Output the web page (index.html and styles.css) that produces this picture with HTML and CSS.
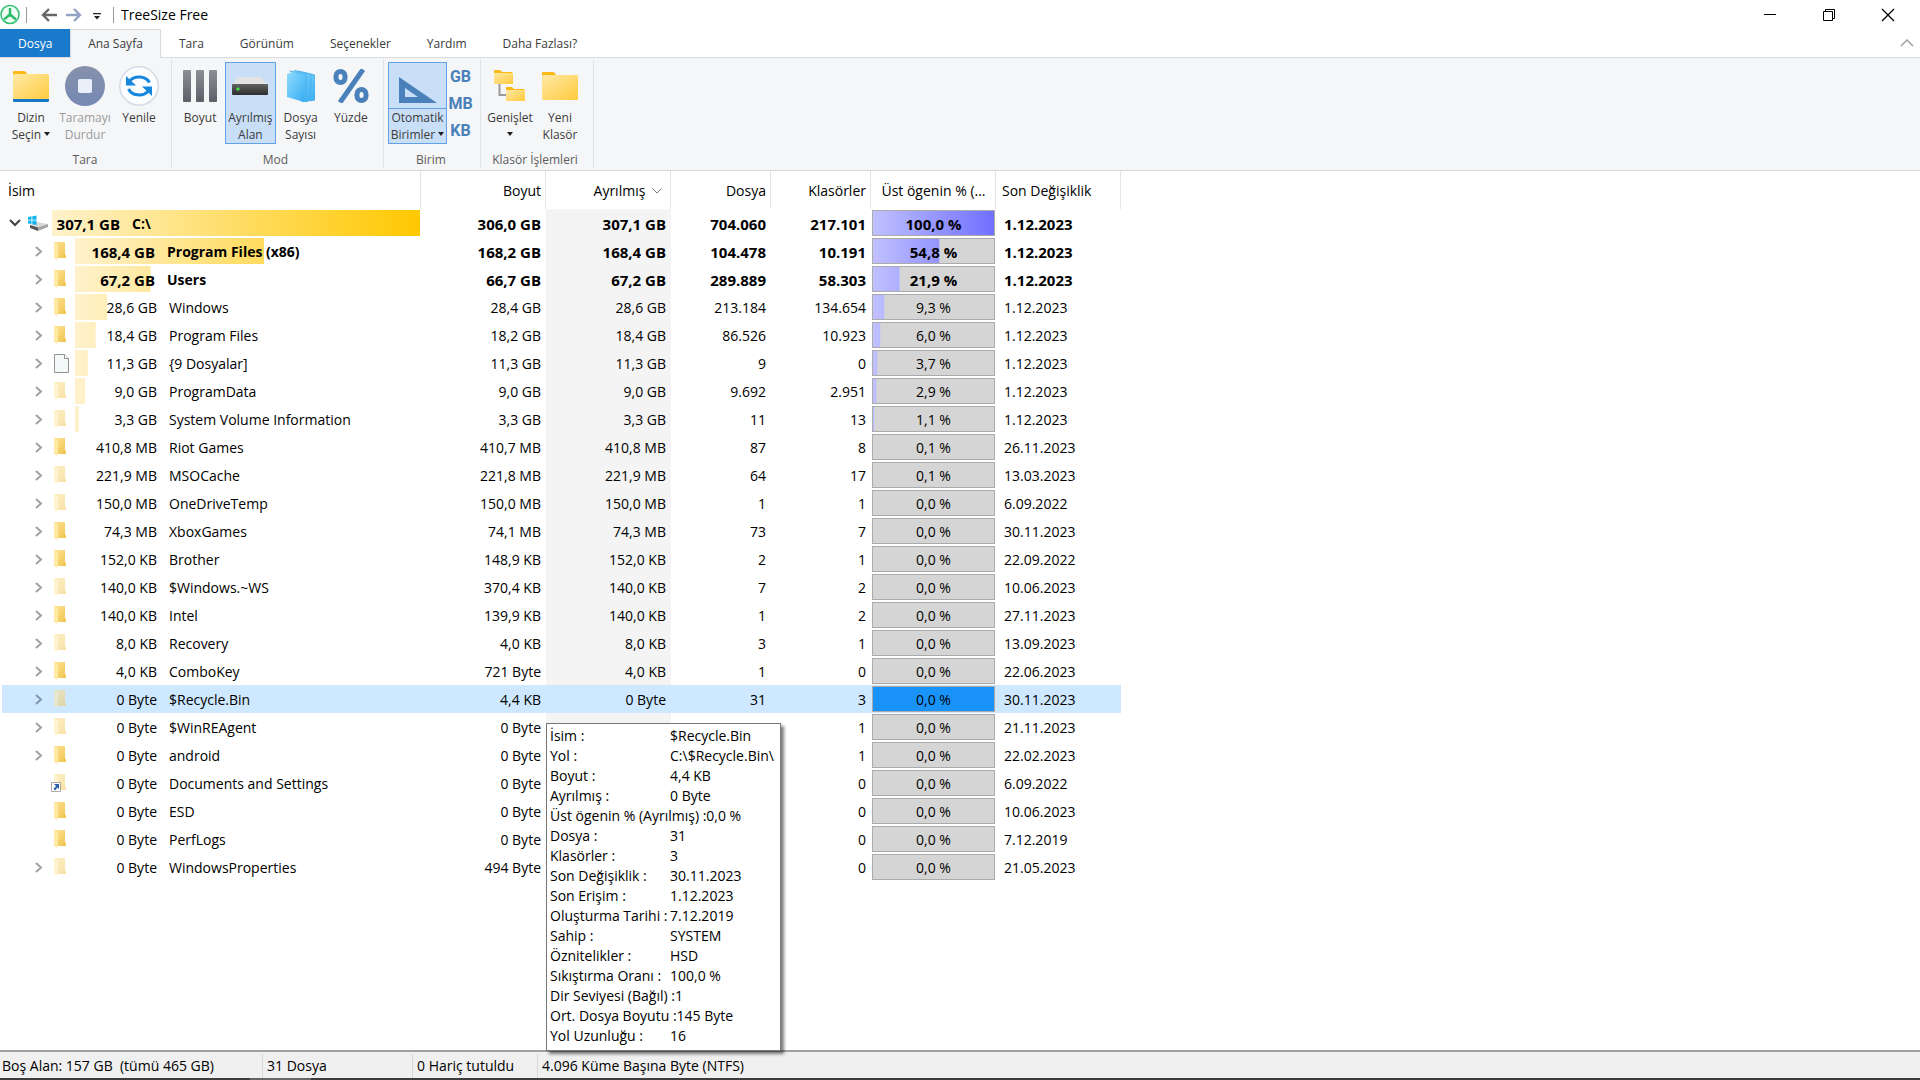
FILE: index.html
```html
<!DOCTYPE html>
<html lang="tr">
<head>
<meta charset="utf-8">
<meta name="viewport" content="width=device-width, initial-scale=1">
<title>TreeSize Free</title>
<link rel="stylesheet" href="styles.css">
</head>
<body>
<svg class="sprite" aria-hidden="true">
  <defs>
    <linearGradient id="g-folder" x1="0" y1="0" x2="1" y2="1"><stop offset="0" stop-color="#ffe9a6"/><stop offset="1" stop-color="#ffcb3d"/></linearGradient>
    <linearGradient id="g-small" x1="0" y1="0" x2="1" y2="1"><stop offset="0" stop-color="#ffe596"/><stop offset="1" stop-color="#f0c24c"/></linearGradient>
    <linearGradient id="g-bar" x1="0" y1="0" x2="0" y2="1"><stop offset="0" stop-color="#8c8f96"/><stop offset="1" stop-color="#5c5f67"/></linearGradient>
    <linearGradient id="g-stop" x1="0" y1="0" x2="0" y2="1"><stop offset="0" stop-color="#8691ab"/><stop offset="1" stop-color="#7689b4"/></linearGradient>
    <linearGradient id="g-drive" x1="0" y1="0" x2="0" y2="1"><stop offset="0" stop-color="#626262"/><stop offset="1" stop-color="#2e2e2e"/></linearGradient>
    <linearGradient id="g-page" x1="0" y1="0" x2="1" y2="1"><stop offset="0" stop-color="#8fdcff"/><stop offset="1" stop-color="#3aaef2"/></linearGradient>
  </defs>
  <symbol id="folder" viewBox="0 0 12 18">
    <path d="M0 0H11V12.500L12 13V16H0Z" fill="url(#g-small)"/>
    <path d="M0 0L4 2.500V15L3 18L0 15.500Z" fill="#ffe9a3"/>
  </symbol>
  <symbol id="file" viewBox="0 0 15 19">
    <path d="M.5.5H10.500L14.500 4.500V18.500H.5Z" fill="#f5f8f9" stroke="#929292"/>
    <path d="M10.500.5V4.500H14.500" fill="#fff" stroke="#929292"/>
  </symbol>
  <symbol id="closed" viewBox="0 0 8 11"><path d="M1 1L6 5.500L1 10" fill="none" stroke="currentColor" stroke-width="2"/></symbol>
</svg>

<header class="titlebar">
  <svg class="logo" width="20" height="21" viewBox="0 0 20 21"><circle cx="10" cy="10.500" r="9" fill="#f0fdf5" stroke="#33c172" stroke-width="1.500"/><path d="M10 4V10.500L4 15.500M10 10.500L16 15.500" fill="none" stroke="#2cbd6b" stroke-width="2.500"/><path d="M10 8L13 12.500H7Z" fill="#2cbd6b"/></svg>
  <span class="rule"></span>
  <button class="quick back" aria-label="Geri"><svg width="16" height="14" viewBox="0 0 16 14"><path d="M16 7H2M8 1L2 7L8 13" fill="none" stroke="#676767" stroke-width="2.400"/></svg></button>
  <button class="quick forward" aria-label="İleri"><svg width="16" height="14" viewBox="0 0 16 14"><path d="M0 7H14M8 1L14 7L8 13" fill="none" stroke="#93a3c4" stroke-width="2.400"/></svg></button>
  <button class="quick more" aria-label="Özelleştir"><svg width="8" height="7" viewBox="0 0 8 7"><path d="M0 0H8V1.200H0ZM1 3H7L4 6.500Z" fill="#222"/></svg></button>
  <span class="rule"></span>
  <h1 class="title">TreeSize Free</h1>
  <div class="window-buttons">
    <button aria-label="Küçült"><svg width="14" height="14" viewBox="0 0 14 14"><path d="M1 6.500H13" stroke="#000"/></svg></button>
    <button aria-label="Geri yükle"><svg width="14" height="14" viewBox="0 0 14 14"><path d="M1.500 3.500H10.500V12.500H1.500ZM3.500 3V1.500H12.500V10.500H11" fill="none" stroke="#000"/></svg></button>
    <button aria-label="Kapat"><svg width="14" height="14" viewBox="0 0 14 14"><path d="M1 1L13 13M13 1L1 13" stroke="#000" stroke-width="1.300"/></svg></button>
  </div>
</header>

<nav class="tabs">
  <button class="tab file-tab">Dosya</button>
  <button class="tab active">Ana Sayfa</button>
  <button class="tab">Tara</button>
  <button class="tab">Görünüm</button>
  <button class="tab">Seçenekler</button>
  <button class="tab">Yardım</button>
  <button class="tab">Daha Fazlası?</button>
  <button class="collapse" aria-label="Şeridi daralt"><svg width="14" height="8" viewBox="0 0 14 8"><path d="M1 7L7 1L13 7" fill="none" stroke="#a0a0a0" stroke-width="1.500"/></svg></button>
</nav>

<section class="ribbon">
  <div class="group scan">
    <div class="tools">
      <button class="tool"><span class="pic"><svg width="36" height="32" viewBox="0 0 36 32"><path d="M0 2Q0 1 1 1H11Q13 1 14 4H34V12H0Z" fill="#fbb916"/><rect y="4" width="36" height="26" rx="1.500" fill="url(#g-folder)"/><path d="M0 29H36V30.500Q36 32 34.500 32H1.500Q0 32 0 30.500Z" fill="#1577c8"/></svg></span><span>Dizin<br>Seçin <i class="caret"></i></span></button>
      <button class="tool" disabled><span class="pic"><svg width="40" height="40" viewBox="0 0 40 40"><circle cx="20" cy="20" r="20" fill="url(#g-stop)"/><rect x="13" y="13" width="14" height="14" rx="2" fill="#eaf0fa"/></svg></span><span>Taramayı<br>Durdur</span></button>
      <button class="tool"><span class="pic"><svg width="40" height="40" viewBox="0 0 40 40"><circle cx="20" cy="20" r="19.200" fill="#fcfdff" stroke="#d3dae8" stroke-width="1.500"/><path d="M30.500 16.500A11.500 9.500 0 0 0 11 14.500M9.500 23A11.500 9.500 0 0 0 29 25.500" fill="none" stroke="#1587dc" stroke-width="3"/><path d="M7 10V19.500H17ZM33 30V20.500H23Z" fill="#1587dc"/></svg></span><span>Yenile</span></button>
    </div>
    <h2>Tara</h2>
  </div>
  <div class="group mode">
    <div class="tools">
      <button class="tool"><span class="pic"><svg width="34" height="32" viewBox="0 0 34 32"><g fill="url(#g-bar)"><rect width="8" height="32" rx="1"/><rect x="13" width="8" height="32" rx="1"/><rect x="26" width="8" height="32" rx="1"/></g></svg></span><span>Boyut</span></button>
      <button class="tool on"><span class="pic"><svg width="36" height="18" viewBox="0 0 36 18"><path d="M6 0H29L36 8H0Z" fill="#e3e3e3"/><rect y="7" width="36" height="11" rx="1" fill="url(#g-drive)"/><circle cx="6" cy="12" r="1.700" fill="#3fe03f"/></svg></span><span>Ayrılmış<br>Alan</span></button>
      <button class="tool"><span class="pic"><svg width="28" height="32" viewBox="0 0 28 32"><g fill="url(#g-page)" stroke="#48b0ec" stroke-width=".8"><path d="M11 1L28 5V30L23 31V6Z"/><path d="M7 .5L24 4V30L19 32V6Z"/><path d="M3 1L19 4.500V32L14 31V6Z"/></g><path d="M0 4L5 2L17 5V32L0 27Z" fill="url(#g-page)"/></svg></span><span>Dosya<br>Sayısı</span></button>
      <button class="tool"><span class="pic"><svg width="36" height="34" viewBox="0 0 36 34"><g fill="none" stroke="#4a81bb" stroke-width="5"><rect x="3" y="2.500" width="9" height="11" rx="4.500"/><rect x="24" y="20.500" width="9" height="11" rx="4.500"/><path d="M30 .5L7 33.500"/></g></svg></span><span>Yüzde</span></button>
    </div>
    <h2>Mod</h2>
  </div>
  <div class="group unit">
    <div class="tools">
      <button class="tool on split"><span class="pic"><svg width="38" height="26" viewBox="0 0 38 26"><path fill-rule="evenodd" d="M0 0L38 26H0ZM6 11V20H19Z" fill="#4a81bb"/></svg></span><span>Otomatik<br>Birimler <i class="caret"></i></span></button>
      <div class="sizes"><button>GB</button><button>MB</button><button>KB</button></div>
    </div>
    <h2>Birim</h2>
  </div>
  <div class="group ops">
    <div class="tools">
      <button class="tool"><span class="pic"><svg width="32" height="32" viewBox="0 0 32 32"><path d="M5.500 14V25H13" fill="none" stroke="#9a9a9a" stroke-width="2"/><path d="M0 0H6L8 2H18V5H0Z" fill="#fbb916"/><rect y="3" width="19" height="11" fill="url(#g-folder)"/><path d="M12 17H18L20 19H30V22H12Z" fill="#fbb916"/><rect x="12" y="20" width="19" height="11" fill="url(#g-folder)"/></svg></span><span>Genişlet<br><i class="caret"></i></span></button>
      <button class="tool"><span class="pic"><svg width="36" height="30" viewBox="0 0 36 30"><path d="M0 2Q0 1 1 1H11Q13 1 14 4H34V12H0Z" fill="#fbb916"/><rect y="4" width="36" height="25" rx="1.500" fill="url(#g-folder)"/></svg></span><span>Yeni<br>Klasör</span></button>
    </div>
    <h2>Klasör İşlemleri</h2>
  </div>
</section>

<main class="content">
<table class="tree">
  <colgroup><col class="c-name"><col class="c-size"><col class="c-size"><col class="c-count"><col class="c-count"><col class="c-size"><col class="c-size"></colgroup>
  <thead><tr><th class="left">İsim</th><th>Boyut</th><th class="sorted">Ayrılmış <svg width="10" height="6" viewBox="0 0 10 6"><path d="M.5.5L5 5L9.500.5" fill="none" stroke="#777"/></svg></th><th>Dosya</th><th>Klasörler</th><th class="center">Üst ögenin % (...</th><th class="left">Son Değişiklik</th></tr></thead>
  <tbody>
  <tr class="root big"><td><div class="node"><button class="toggle" aria-label="Daralt"><svg width="12" height="8" viewBox="0 0 12 8"><path d="M1 1L6 6L11 1" fill="none" stroke="#404040" stroke-width="2"/></svg></button><svg class="icon" width="20" height="16" viewBox="0 0 20 16"><path d="M8 7L20 9L10 13L2 10Z" fill="#d9d9d9"/><path d="M2 10L10 12.500V16L2 13Z" fill="#555"/><path d="M10 12.500L20 9V12L10 16Z" fill="#a5a5a5"/><path d="M0 2L3.500 1.300V4.800H0ZM4.300 1.200L8.500.5V4.800H4.300ZM0 5.600H3.500V9L0 8.500ZM4.300 5.600H8.500V10L4.300 9.200Z" fill="#12b5f0"/></svg><div class="fill"><span class="bar" style="--p:100%"></span><span class="label"><b>307,1 GB</b><span>C:\</span></span></div></div></td><td>306,0 GB</td><td>307,1 GB</td><td>704.060</td><td>217.101</td><td><div class="pct"><span class="bar" style="--p:100%"></span><span class="val">100,0 %</span></div></td><td>1.12.2023</td></tr>
  <tr class="big"><td><div class="node"><button class="toggle" aria-label="Genişlet"><svg><use href="#closed"/></svg></button><svg class="icon"><use href="#folder"/></svg><div class="fill"><span class="bar" style="--p:54.8%"></span><span class="label"><b>168,4 GB</b><span>Program Files (x86)</span></span></div></div></td><td>168,2 GB</td><td>168,4 GB</td><td>104.478</td><td>10.191</td><td><div class="pct"><span class="bar" style="--p:54.8%"></span><span class="val">54,8 %</span></div></td><td>1.12.2023</td></tr>
  <tr class="big"><td><div class="node"><button class="toggle" aria-label="Genişlet"><svg><use href="#closed"/></svg></button><svg class="icon"><use href="#folder"/></svg><div class="fill"><span class="bar" style="--p:21.9%"></span><span class="label"><b>67,2 GB</b><span>Users</span></span></div></div></td><td>66,7 GB</td><td>67,2 GB</td><td>289.889</td><td>58.303</td><td><div class="pct"><span class="bar" style="--p:21.9%"></span><span class="val">21,9 %</span></div></td><td>1.12.2023</td></tr>
  <tr><td><div class="node"><button class="toggle" aria-label="Genişlet"><svg><use href="#closed"/></svg></button><svg class="icon"><use href="#folder"/></svg><div class="fill"><span class="bar" style="--p:9.3%"></span><span class="label"><b>28,6 GB</b><span>Windows</span></span></div></div></td><td>28,4 GB</td><td>28,6 GB</td><td>213.184</td><td>134.654</td><td><div class="pct"><span class="bar" style="--p:9.3%"></span><span class="val">9,3 %</span></div></td><td>1.12.2023</td></tr>
  <tr><td><div class="node"><button class="toggle" aria-label="Genişlet"><svg><use href="#closed"/></svg></button><svg class="icon"><use href="#folder"/></svg><div class="fill"><span class="bar" style="--p:6%"></span><span class="label"><b>18,4 GB</b><span>Program Files</span></span></div></div></td><td>18,2 GB</td><td>18,4 GB</td><td>86.526</td><td>10.923</td><td><div class="pct"><span class="bar" style="--p:6%"></span><span class="val">6,0 %</span></div></td><td>1.12.2023</td></tr>
  <tr><td><div class="node"><button class="toggle" aria-label="Genişlet"><svg><use href="#closed"/></svg></button><svg class="icon file"><use href="#file"/></svg><div class="fill"><span class="bar" style="--p:3.7%"></span><span class="label"><b>11,3 GB</b><span>{9 Dosyalar]</span></span></div></div></td><td>11,3 GB</td><td>11,3 GB</td><td>9</td><td>0</td><td><div class="pct"><span class="bar" style="--p:3.7%"></span><span class="val">3,7 %</span></div></td><td>1.12.2023</td></tr>
  <tr class="hidden-item"><td><div class="node"><button class="toggle" aria-label="Genişlet"><svg><use href="#closed"/></svg></button><svg class="icon"><use href="#folder"/></svg><div class="fill"><span class="bar" style="--p:2.9%"></span><span class="label"><b>9,0 GB</b><span>ProgramData</span></span></div></div></td><td>9,0 GB</td><td>9,0 GB</td><td>9.692</td><td>2.951</td><td><div class="pct"><span class="bar" style="--p:2.9%"></span><span class="val">2,9 %</span></div></td><td>1.12.2023</td></tr>
  <tr class="hidden-item"><td><div class="node"><button class="toggle" aria-label="Genişlet"><svg><use href="#closed"/></svg></button><svg class="icon"><use href="#folder"/></svg><div class="fill"><span class="bar" style="--p:1.1%"></span><span class="label"><b>3,3 GB</b><span>System Volume Information</span></span></div></div></td><td>3,3 GB</td><td>3,3 GB</td><td>11</td><td>13</td><td><div class="pct"><span class="bar" style="--p:1.1%"></span><span class="val">1,1 %</span></div></td><td>1.12.2023</td></tr>
  <tr><td><div class="node"><button class="toggle" aria-label="Genişlet"><svg><use href="#closed"/></svg></button><svg class="icon"><use href="#folder"/></svg><div class="fill"><span class="label"><b>410,8 MB</b><span>Riot Games</span></span></div></div></td><td>410,7 MB</td><td>410,8 MB</td><td>87</td><td>8</td><td><div class="pct"><span class="val">0,1 %</span></div></td><td>26.11.2023</td></tr>
  <tr class="hidden-item"><td><div class="node"><button class="toggle" aria-label="Genişlet"><svg><use href="#closed"/></svg></button><svg class="icon"><use href="#folder"/></svg><div class="fill"><span class="label"><b>221,9 MB</b><span>MSOCache</span></span></div></div></td><td>221,8 MB</td><td>221,9 MB</td><td>64</td><td>17</td><td><div class="pct"><span class="val">0,1 %</span></div></td><td>13.03.2023</td></tr>
  <tr class="hidden-item"><td><div class="node"><button class="toggle" aria-label="Genişlet"><svg><use href="#closed"/></svg></button><svg class="icon"><use href="#folder"/></svg><div class="fill"><span class="label"><b>150,0 MB</b><span>OneDriveTemp</span></span></div></div></td><td>150,0 MB</td><td>150,0 MB</td><td>1</td><td>1</td><td><div class="pct"><span class="val">0,0 %</span></div></td><td>6.09.2022</td></tr>
  <tr><td><div class="node"><button class="toggle" aria-label="Genişlet"><svg><use href="#closed"/></svg></button><svg class="icon"><use href="#folder"/></svg><div class="fill"><span class="label"><b>74,3 MB</b><span>XboxGames</span></span></div></div></td><td>74,1 MB</td><td>74,3 MB</td><td>73</td><td>7</td><td><div class="pct"><span class="val">0,0 %</span></div></td><td>30.11.2023</td></tr>
  <tr><td><div class="node"><button class="toggle" aria-label="Genişlet"><svg><use href="#closed"/></svg></button><svg class="icon"><use href="#folder"/></svg><div class="fill"><span class="label"><b>152,0 KB</b><span>Brother</span></span></div></div></td><td>148,9 KB</td><td>152,0 KB</td><td>2</td><td>1</td><td><div class="pct"><span class="val">0,0 %</span></div></td><td>22.09.2022</td></tr>
  <tr class="hidden-item"><td><div class="node"><button class="toggle" aria-label="Genişlet"><svg><use href="#closed"/></svg></button><svg class="icon"><use href="#folder"/></svg><div class="fill"><span class="label"><b>140,0 KB</b><span>$Windows.~WS</span></span></div></div></td><td>370,4 KB</td><td>140,0 KB</td><td>7</td><td>2</td><td><div class="pct"><span class="val">0,0 %</span></div></td><td>10.06.2023</td></tr>
  <tr><td><div class="node"><button class="toggle" aria-label="Genişlet"><svg><use href="#closed"/></svg></button><svg class="icon"><use href="#folder"/></svg><div class="fill"><span class="label"><b>140,0 KB</b><span>Intel</span></span></div></div></td><td>139,9 KB</td><td>140,0 KB</td><td>1</td><td>2</td><td><div class="pct"><span class="val">0,0 %</span></div></td><td>27.11.2023</td></tr>
  <tr class="hidden-item"><td><div class="node"><button class="toggle" aria-label="Genişlet"><svg><use href="#closed"/></svg></button><svg class="icon"><use href="#folder"/></svg><div class="fill"><span class="label"><b>8,0 KB</b><span>Recovery</span></span></div></div></td><td>4,0 KB</td><td>8,0 KB</td><td>3</td><td>1</td><td><div class="pct"><span class="val">0,0 %</span></div></td><td>13.09.2023</td></tr>
  <tr><td><div class="node"><button class="toggle" aria-label="Genişlet"><svg><use href="#closed"/></svg></button><svg class="icon"><use href="#folder"/></svg><div class="fill"><span class="label"><b>4,0 KB</b><span>ComboKey</span></span></div></div></td><td>721 Byte</td><td>4,0 KB</td><td>1</td><td>0</td><td><div class="pct"><span class="val">0,0 %</span></div></td><td>22.06.2023</td></tr>
  <tr class="hidden-item selected"><td><div class="node"><button class="toggle" aria-label="Genişlet"><svg><use href="#closed"/></svg></button><svg class="icon"><use href="#folder"/></svg><div class="fill"><span class="label"><b>0 Byte</b><span>$Recycle.Bin</span></span></div></div></td><td>4,4 KB</td><td class="anchor">0 Byte
    <dl class="tooltip" role="tooltip">
      <div><dt>İsim :</dt><dd>$Recycle.Bin</dd></div>
      <div><dt>Yol :</dt><dd>C:\$Recycle.Bin\</dd></div>
      <div><dt>Boyut :</dt><dd>4,4 KB</dd></div>
      <div><dt>Ayrılmış :</dt><dd>0 Byte</dd></div>
      <div><dt>Üst ögenin % (Ayrılmış) :</dt><dd>0,0 %</dd></div>
      <div><dt>Dosya :</dt><dd>31</dd></div>
      <div><dt>Klasörler :</dt><dd>3</dd></div>
      <div><dt>Son Değişiklik :</dt><dd>30.11.2023</dd></div>
      <div><dt>Son Erişim :</dt><dd>1.12.2023</dd></div>
      <div><dt>Oluşturma Tarihi :</dt><dd>7.12.2019</dd></div>
      <div><dt>Sahip :</dt><dd>SYSTEM</dd></div>
      <div><dt>Öznitelikler :</dt><dd>HSD</dd></div>
      <div><dt>Sıkıştırma Oranı :</dt><dd>100,0 %</dd></div>
      <div><dt>Dir Seviyesi (Bağıl) :</dt><dd>1</dd></div>
      <div><dt>Ort. Dosya Boyutu :</dt><dd>145 Byte</dd></div>
      <div><dt>Yol Uzunluğu :</dt><dd>16</dd></div>
    </dl></td><td>31</td><td>3</td><td><div class="pct"><span class="val">0,0 %</span></div></td><td>30.11.2023</td></tr>
  <tr class="hidden-item"><td><div class="node"><button class="toggle" aria-label="Genişlet"><svg><use href="#closed"/></svg></button><svg class="icon"><use href="#folder"/></svg><div class="fill"><span class="label"><b>0 Byte</b><span>$WinREAgent</span></span></div></div></td><td>0 Byte</td><td>0 Byte</td><td>0</td><td>1</td><td><div class="pct"><span class="val">0,0 %</span></div></td><td>21.11.2023</td></tr>
  <tr><td><div class="node"><button class="toggle" aria-label="Genişlet"><svg><use href="#closed"/></svg></button><svg class="icon"><use href="#folder"/></svg><div class="fill"><span class="label"><b>0 Byte</b><span>android</span></span></div></div></td><td>0 Byte</td><td></td><td></td><td>1</td><td><div class="pct"><span class="val">0,0 %</span></div></td><td>22.02.2023</td></tr>
  <tr class="hidden-item"><td><div class="node"><span class="toggle"></span><span class="linked"><svg class="icon"><use href="#folder"/></svg><svg class="shortcut" width="10" height="10" viewBox="0 0 10 10"><path d="M.5.5H9.500V9.500H.5Z" fill="#fff" stroke="#a9a9a9"/><path d="M3 2H8V7L6.500 5.500L4 8.500L2.500 7L5 4Z" fill="#2b5fa5"/></svg></span><div class="fill"><span class="label"><b>0 Byte</b><span>Documents and Settings</span></span></div></div></td><td>0 Byte</td><td></td><td></td><td>0</td><td><div class="pct"><span class="val">0,0 %</span></div></td><td>6.09.2022</td></tr>
  <tr><td><div class="node"><span class="toggle"></span><svg class="icon"><use href="#folder"/></svg><div class="fill"><span class="label"><b>0 Byte</b><span>ESD</span></span></div></div></td><td>0 Byte</td><td></td><td></td><td>0</td><td><div class="pct"><span class="val">0,0 %</span></div></td><td>10.06.2023</td></tr>
  <tr><td><div class="node"><span class="toggle"></span><svg class="icon"><use href="#folder"/></svg><div class="fill"><span class="label"><b>0 Byte</b><span>PerfLogs</span></span></div></div></td><td>0 Byte</td><td></td><td></td><td>0</td><td><div class="pct"><span class="val">0,0 %</span></div></td><td>7.12.2019</td></tr>
  <tr class="hidden-item"><td><div class="node"><button class="toggle" aria-label="Genişlet"><svg><use href="#closed"/></svg></button><svg class="icon"><use href="#folder"/></svg><div class="fill"><span class="label"><b>0 Byte</b><span>WindowsProperties</span></span></div></div></td><td>494 Byte</td><td></td><td></td><td>0</td><td><div class="pct"><span class="val">0,0 %</span></div></td><td>21.05.2023</td></tr>
  </tbody>
</table>
</main>

<footer class="status">
  <span class="s-free">Boş Alan: 157 GB  (tümü 465 GB)</span>
  <span class="s-files">31 Dosya</span>
  <span class="s-excluded">0 Hariç tutuldu</span>
  <span class="s-cluster">4.096 Küme Başına Byte (NTFS)</span>
</footer>
<div class="edge"><span></span></div>
</body>
</html>
```
FILE: styles.css
```css
* { box-sizing: border-box; }

body {
  margin: 0;
  min-height: 100vh;
  display: flex;
  flex-direction: column;
  background: #fff;
  color: #000;
  font: 14px/20px "Open Sans", "Noto Sans", sans-serif;
}

button {
  border: 0;
  padding: 0;
  background: none;
  color: inherit;
  font: inherit;
}

svg { display: block; flex: none; }
.sprite { position: absolute; width: 0; height: 0; }

/* Title bar */
.titlebar { display: flex; align-items: center; height: 29px; }
.rule { width: 1px; height: 16px; background: #9a9a9a; }
.logo { margin-right: 6px; }
.back { margin-left: 14px; }
.forward { margin-left: 9px; }
.more { margin: 3px 12px 0 11px; }
.title { margin: 0 0 0 7px; font-size: 14px; font-weight: 400; }
.window-buttons { display: flex; margin-left: auto; padding-right: 4px; gap: 2px; }
.window-buttons button { display: grid; place-items: center; width: 57px; height: 28px; }

/* Ribbon tabs */
.tabs {
  display: flex;
  height: 29px;
  border-bottom: 1px solid #dadbdc;
  color: #3b3b3b;
  font-size: 12px;
}
.tab { padding: 2px 18px 0; }
.file-tab { width: 70px; background: #1979ca; color: #fff; }
.active {
  width: 91px;
  height: 29px;
  padding: 0;
  border: 1px solid #dadbdc;
  border-bottom: 0;
  background: #f5f6f7;
}
.collapse { margin-left: auto; padding-right: 6px; }

/* Ribbon */
.ribbon {
  display: flex;
  height: 113px;
  padding: 2px 0;
  border-bottom: 1px solid #d6d7d8;
  background: #f5f6f7;
  color: #3b3b3b;
  font-size: 12px;
  line-height: 17px;
}
.group { display: flex; flex-direction: column; border-right: 1px solid #e1e2e3; }
.group h2 {
  margin: 7px 0 0;
  color: #5c5c5c;
  font-size: 12px;
  font-weight: 400;
  text-align: center;
}
.tools { display: flex; height: 84px; padding-top: 2px; }
.scan { width: 172px; padding: 0 5px 0 4px; }
.mode { width: 212px; padding: 0 7px 0 3px; }
.unit { width: 97px; padding: 0 6px 0 4px; }
.ops { width: 113px; padding: 0 8px 0 4px; }
.tool {
  display: flex;
  flex: 1;
  flex-direction: column;
  align-items: stretch;
  justify-content: flex-start;
  height: 82px;
  border: 1px solid transparent;
  text-align: center;
  white-space: nowrap;
}
.tool:disabled { color: #9b9b9b; }
.tool.on { border-color: #62a2e4; background: #c9dff7; }
.pic { display: grid; place-items: center; height: 46px; }
.split { flex: 0 0 59px; }
.split .pic { height: 45px; margin-bottom: 1px; padding-top: 8px; box-shadow: 0 1px #62a2e4; }
.caret {
  display: inline-block;
  margin-bottom: 3px;
  border: 3px solid transparent;
  border-top: 4px solid #1e1e1e;
  border-bottom: 0;
}
.sizes {
  display: flex;
  flex: 1;
  flex-direction: column;
  padding-top: 1px;
  color: #4a81bb;
  font: 700 16px/27px Roboto, sans-serif;
}

/* Folder table */
.content { flex: 1; }
.tree { width: 1121px; table-layout: fixed; border-collapse: collapse; }
.c-name { width: 421px; }
.c-size { width: 125px; }
.c-count { width: 100px; }
.tree th {
  height: 38px;
  padding: 2px 5px 0 8px;
  background: linear-gradient(#e5e5e5, #e5e5e5) right / 1px 100% no-repeat;
  font-weight: 400;
  text-align: right;
}
.tree .left { text-align: left; }
.tree .center { padding: 2px 0 0; text-align: center; }
.tree th:last-child { padding-left: 6px; }
.tree .sorted { padding-right: 9px; }
.sorted svg { display: inline-block; margin: 0 0 2px 3px; }
.tree td { height: 28px; padding: 2px 5px 0 0; text-align: right; }
.tree td:first-child { padding: 0; }
.tree td:nth-child(3) { background: #f4f4f4; }
.tree td:nth-child(6) { padding: 0 1px; }
.tree td:last-child { padding-left: 8px; text-align: left; }
.big { font-size: 15px; font-weight: 700; }

.node { display: flex; align-items: center; padding: 0 1px 0 35px; text-align: left; }
.root .node { padding-left: 9px; }
.toggle { width: 19px; color: #a2a2a2; }
.toggle svg { width: 8px; height: 11px; }
.root .toggle svg { width: 12px; height: 8px; }
.icon { width: 12px; height: 18px; margin-right: 9px; }
.icon.file { width: 15px; height: 19px; margin-right: 6px; }
.root .icon { width: 20px; height: 16px; margin-right: 4px; }
.hidden-item .icon { opacity: .5; }
.linked { position: relative; }
.shortcut { position: absolute; left: -3px; bottom: 0; }

.fill, .pct { display: grid; align-items: center; height: 26px; }
.fill { flex: 1; }
.fill > *, .pct > * { grid-area: 1 / 1; }
.bar {
  height: 100%;
  background: linear-gradient(90deg, #fff2cc, #ffc800);
  clip-path: inset(0 calc(100% - var(--p)) 0 0);
}
.label, .val { z-index: 1; padding-top: 2px; }
.label { display: grid; grid-template-columns: 82px auto; gap: 12px; justify-content: start; white-space: nowrap; }
.label b { font-weight: inherit; text-align: right; }
.big .label { grid-template-columns: 80px auto; }
.big .label span { font-size: 14px; }
.root .label { grid-template-columns: 68px auto; }

.pct { border: 1px solid #ababab; background: #d5d5d5; text-align: center; }
.pct .bar { background: linear-gradient(90deg, #c0c0ff, #7070ff); }

.tree .selected td { background: #cde8ff; }
.tree .selected td:first-child { background: linear-gradient(90deg, #fff 2px, #cde8ff 2px); }
.selected .toggle { color: #7f97ac; }
.selected .pct { background: #1a93f8; }

/* Row tooltip */
.anchor { position: relative; }
.tooltip {
  position: absolute;
  z-index: 2;
  top: 38px;
  left: 0;
  width: 235px;
  margin: 0;
  padding: 2px 3px 4px;
  border: 1px solid #767676;
  background: #fff;
  box-shadow: 3px 3px 3px rgba(0, 0, 0, .5);
  text-align: left;
  white-space: nowrap;
}
.tooltip div { display: flex; }
.tooltip dt { min-width: 120px; }
.tooltip dd { margin: 0; }

/* Status bar */
.status {
  display: flex;
  height: 28px;
  padding-top: 2px;
  border-top: 2px solid #a0a0a0;
  background: #f0f0f0;
  line-height: 24px;
  white-space: pre;
}
.status span { padding-left: 4px; border-right: 1px solid #d7d7d7; }
.status .s-free { width: 263px; padding-left: 2px; }
.s-files { width: 150px; }
.s-excluded { width: 125px; }
.status .s-cluster { flex: 1; border: 0; }
.edge { height: 2px; padding-left: 250px; background: #3c3c3c; }
.edge span { display: block; width: 61px; height: 2px; background: #666; }
```
